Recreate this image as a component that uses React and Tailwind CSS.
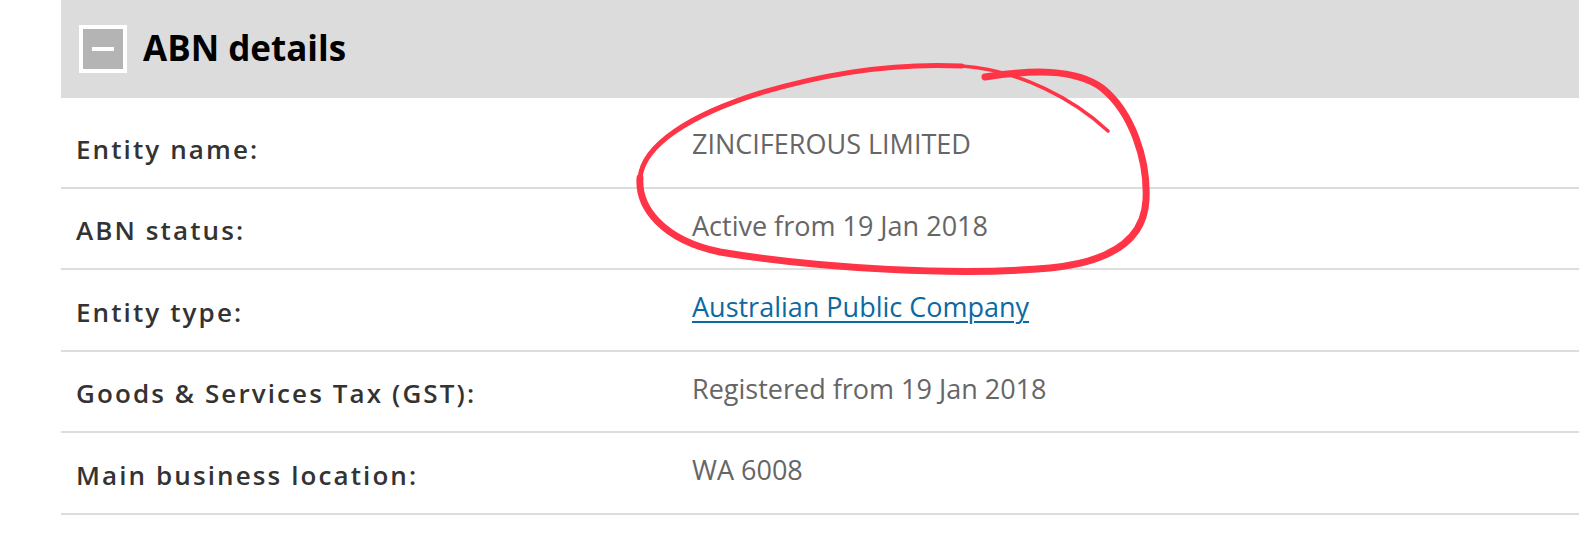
export default function App() {
  const rows = [
    { label: "Entity name:", value: "ZINCIFEROUS LIMITED" },
    { label: "ABN status:", value: "Active from 19 Jan 2018" },
    { label: "Entity type:", value: "Australian Public Company", link: true },
    { label: "Goods & Services Tax (GST):", value: "Registered from 19 Jan 2018" },
    { label: "Main business location:", value: "WA 6008" },
  ];
  return (
    <div className="relative w-[1579px] h-[550px] bg-white overflow-hidden" style={{ fontFamily: '"Open Sans", "Noto Sans", sans-serif' }}>
      <div className="ml-[61px]">
        <div className="h-[98px] bg-[#dcdcdc] flex items-center pl-[18px] gap-[16px]">
          <div className="w-[48px] h-[48px] bg-white p-[4px]">
            <div className="w-full h-full bg-[#b4b4b4] flex items-center justify-center">
              <div className="w-[22px] h-[4px] bg-white"></div>
            </div>
          </div>
          <div className="text-[35px] font-bold text-black leading-none pb-[4px]">ABN details</div>
        </div>
        <div className="pt-[9px]">
          {rows.map((r, i) => (
            <div key={i} className="h-[81.5px] border-b-2 border-[#dddddd] flex items-center">
              <div className="w-[631px] pl-[15px] pt-[4px] text-[26px] leading-none font-semibold text-[#333333] tracking-[2.1px]">{r.label}</div>
              {r.link ? (
                <a href="#" className="text-[27px] leading-none pb-[6px] text-[#0b6aa2] underline underline-offset-[4px] decoration-[2px]">{r.value}</a>
              ) : (
                <div className="text-[27px] leading-none pb-[6px] text-[#666666]">{r.value}</div>
              )}
            </div>
          ))}
        </div>
      </div>
      <svg className="absolute left-0 top-0 pointer-events-none" width="1579" height="550" viewBox="0 0 1579 550">
        <path
          d="M 985 77 C 1030 70, 1075 68, 1102 88 C 1132 112, 1148 160, 1146 200 C 1144 240, 1110 262, 1050 268 C 960 276, 820 269, 720 252 C 662 240, 638 207, 640 178"
          fill="none"
          stroke="#ff3446"
          strokeWidth="7"
          strokeLinecap="round"
          strokeLinejoin="round"
        />
        <path
          d="M 640 178 C 643 145, 690 115, 760 93 C 830 72, 900 63, 962 66"
          fill="none"
          stroke="#ff3446"
          strokeWidth="5"
          strokeLinecap="round"
          strokeLinejoin="round"
        />
        <path
          d="M 962 66 C 1020 70, 1075 100, 1108 131"
          fill="none"
          stroke="#ff3446"
          strokeWidth="3.5"
          strokeLinecap="round"
        />
      </svg>
    </div>
  );
}
